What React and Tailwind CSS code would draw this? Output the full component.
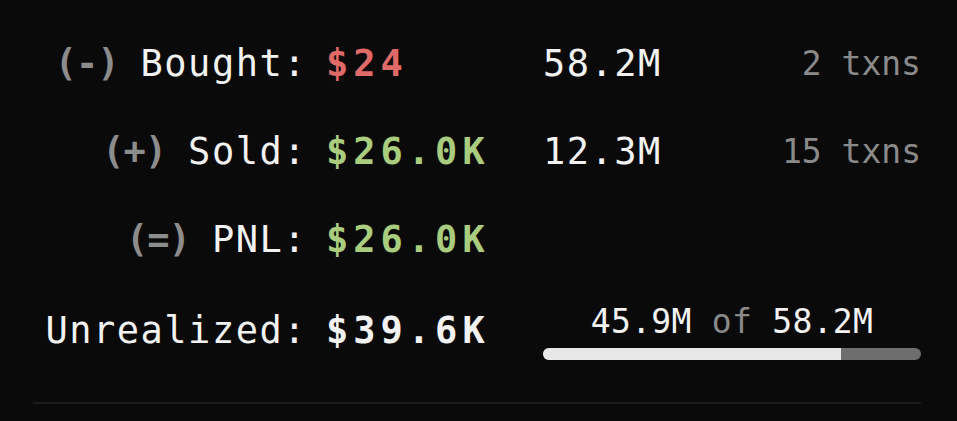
const rows = [
  { sign: "(-)", label: "Bought:", value: "$24", color: "text-[#e06a68]", amount: "58.2M", txns: "2 txns" },
  { sign: "(+)", label: "Sold:", value: "$26.0K", color: "text-[#a9cc7e]", amount: "12.3M", txns: "15 txns" },
  { sign: "(=)", label: "PNL:", value: "$26.0K", color: "text-[#a9cc7e]" },
];

const held = 45.9;
const total = 58.2;

export default function App() {
  return (
    <div className="min-h-screen w-full bg-[#0a0a0a] text-[#f2f2f2] font-['DejaVu_Sans_Mono',monospace] pl-[33px] pr-[36px] pt-[42px]">
      <div className="flex flex-col gap-[44px]">
        {rows.map((r) => (
          <div key={r.label} className="grid grid-cols-[293px_217px_378px] items-center text-[37px] leading-[44px]">
            <div className="flex justify-end items-center pr-[19px] whitespace-pre">
              <span className="font-bold text-[#8c8c8c] tracking-[-1px] mr-[22px]">{r.sign}</span>
              <span className="tracking-[1.5px]">{r.label}</span>
            </div>
            <div className={`font-bold tracking-[5px] ${r.color}`}>{r.value}</div>
            <div className="flex items-center justify-between">
              <span className="tracking-[1.5px]">{r.amount}</span>
              {r.txns && <span className="text-[33px] text-[#8a8a8a]">{r.txns}</span>}
            </div>
          </div>
        ))}
      </div>

      {/* Unrealized */}
      <div className="mt-[40px] grid grid-cols-[293px_217px_378px] items-center">
        <div className="text-right pr-[19px] text-[37px] leading-[44px] tracking-[1.5px]">Unrealized:</div>
        <div className="font-bold text-[37px] leading-[44px] tracking-[5px]">$39.6K</div>
        <div className="flex flex-col">
          <div className="text-center text-[33px] leading-[40px] tracking-[0.3px]">
            45.9M <span className="text-[#8a8a8a]">of</span> 58.2M
          </div>
          <div className="mt-[6px] h-[12px] w-full rounded-full bg-[#6e6e6e] overflow-hidden">
            <div className="h-full bg-[#e8e8e8]" style={{ width: `${(held / total) * 100}%` }} />
          </div>
        </div>
      </div>

      <div className="mt-[42px] h-[2px] bg-[#1c1c1c]" />
    </div>
  );
}
